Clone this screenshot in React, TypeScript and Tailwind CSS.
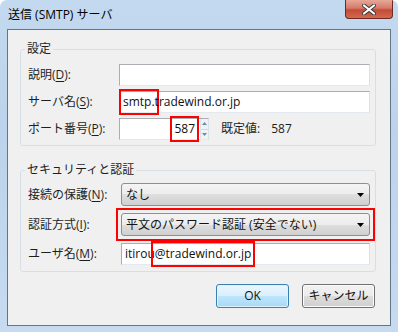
import React from "react";

// Windows 7 style "送信 (SMTP) サーバ" dialog with red annotation boxes.

const FONT = "font-['Open_Sans','Noto_Sans_CJK_JP',sans-serif]";

function Label({ text, hot, tail = "):" }: { text: string; hot: string; tail?: string }) {
  return (
    <span className="whitespace-nowrap text-[#1e1e1e]">
      {text}(<span className="underline underline-offset-2">{hot}</span>
      {tail}
    </span>
  );
}

function TextBox({ children, className = "" }: { children?: React.ReactNode; className?: string }) {
  return (
    <div
      className={`flex h-[22px] items-center border border-[#abadb3] border-b-[#e3e9ef] border-r-[#dbdfe6] bg-white px-[3px] text-[#111] ${className}`}
    >
      {children}
    </div>
  );
}

function ComboBox({ value }: { value: string }) {
  return (
    <div className="flex h-[23px] items-center justify-between rounded-[3px] border border-[#8e8f8f] bg-[linear-gradient(#f4f4f4,#ececec_50%,#dedede_50%,#d0d0d0)] pl-[4px] pr-[5px] text-[#111]">
      <span>{value}</span>
      <svg width="7" height="4" viewBox="0 0 7 4">
        <path d="M0 0h7L3.5 4z" fill="#000" />
      </svg>
    </div>
  );
}

function Spin() {
  return (
    <div className="flex h-full w-[8px] flex-col border-l border-[#dde4ea] bg-[#eef2f6]">
      <div className="flex flex-1 items-center justify-center border-b border-[#cfd8e0]">
        <svg width="5" height="3" viewBox="0 0 5 3">
          <path d="M0 3h5L2.5 0z" fill="#6f8aa6" />
        </svg>
      </div>
      <div className="flex flex-1 items-center justify-center">
        <svg width="5" height="3" viewBox="0 0 5 3">
          <path d="M0 0h5L2.5 3z" fill="#6f8aa6" />
        </svg>
      </div>
    </div>
  );
}

function Group({ title, children }: { title: string; children: React.ReactNode }) {
  return (
    <fieldset className="mr-[1px] rounded-[3px] border border-[#d5dfe5] pl-[7px] pr-[5px]">
      <legend className="-ml-[3px] px-[2px] leading-4 text-[#1e1e1e]">{title}</legend>
      {children}
    </fieldset>
  );
}

export default function App() {
  return (
    <div
      className={`${FONT} flex h-[332px] w-[398px] flex-col overflow-hidden rounded-t-[7px] bg-[linear-gradient(180deg,#c3d9ef,#bcd3eb_40%,#c6dbf0)] px-[7px] text-[12px]`}
    >
      {/* title bar */}
      <div className="flex h-[29px] shrink-0 items-start justify-between">
        <span className="mt-[6px] pl-[1px] text-[12px] text-black">送信 (SMTP) サーバ</span>
        <div className="-mr-[2px] flex h-[19px] w-[48px] items-center justify-center rounded-b-[4px] border border-t-0 border-[#6e2a22] bg-[linear-gradient(#e7a897,#d77a69_45%,#c44a38_55%,#d06a4f)]">
          <svg width="14" height="11" viewBox="0 0 14 11">
            <path d="M2 1.5l10 8M12 1.5l-10 8" stroke="#3b3b3b" strokeWidth="4" strokeLinecap="round" />
            <path d="M2 1.5l10 8M12 1.5l-10 8" stroke="#fff" strokeWidth="2.2" strokeLinecap="round" />
          </svg>
        </div>
      </div>

      {/* client area */}
      <div className="flex h-[297px] shrink-0 flex-col border border-[#647588] bg-[#f0f0f0] pl-[12px] pr-[13px] pt-[11px]">
        <Group title="設定">
          <div className="grid grid-cols-[91px_1fr] items-center gap-y-[5px] pb-[5px] pt-[7px]">
            <Label text="説明" hot="D" />
            <TextBox />

            <Label text="サーバ名" hot="S" />
            <TextBox>
              <span className="outline-2 outline-offset-2 outline-[#ff0000]">smtp.</span>
              <span>tradewind.or.jp</span>
            </TextBox>

            <Label text="ポート番号" hot="P" />
            <div className="flex items-center">
              <div className="flex h-[22px] w-[90px] items-stretch border border-[#abadb3] border-b-[#e3e9ef] border-r-[#dbdfe6] bg-white">
                <div className="flex flex-1 items-center justify-end pr-[5px] text-[#111]">
                  <span className="outline-2 outline-offset-2 outline-[#ff0000]">587</span>
                </div>
                <Spin />
              </div>
              <span className="ml-[12px] text-[#1e1e1e]">既定値:</span>
              <span className="ml-[11px] text-[#1e1e1e]">587</span>
            </div>
          </div>
        </Group>

        <div className="mt-[16px]">
          <Group title="セキュリティと認証">
            <div className="grid grid-cols-[93px_1fr] items-center gap-y-[7px] pb-[6px] pt-[5px]">
              <Label text="接続の保護" hot="N" />
              <ComboBox value="なし" />

              <Label text="認証方式" hot="I" />
              <div className="outline-2 outline-offset-[3px] outline-[#ff0000]">
                <ComboBox value="平文のパスワード認証 (安全でない)" />
              </div>

              <Label text="ユーザ名" hot="M" />
              <TextBox>
                <span>itirou</span>
                <span className="outline-2 outline-offset-2 outline-[#ff0000]">@tradewind.or.jp</span>
              </TextBox>
            </div>
          </Group>
        </div>

        <div className="mt-[12px] flex justify-end gap-[13px] pr-[2px]">
          <button className="h-[24px] w-[73px] rounded-[3px] border border-[#3c7fb1] bg-[linear-gradient(#eaf6fd,#d9f0fc_50%,#bee6fd_50%,#a7d9f5)] text-[#111] shadow-[inset_0_0_0_1px_#dff2fc]">
            OK
          </button>
          <button className="h-[24px] w-[73px] rounded-[3px] border border-[#707070] bg-[linear-gradient(#f2f2f2,#ebebeb_50%,#dddddd_50%,#cfcfcf)] text-[#111] shadow-[inset_0_0_0_1px_#fcfcfc]">
            キャンセル
          </button>
        </div>
      </div>
    </div>
  );
}
